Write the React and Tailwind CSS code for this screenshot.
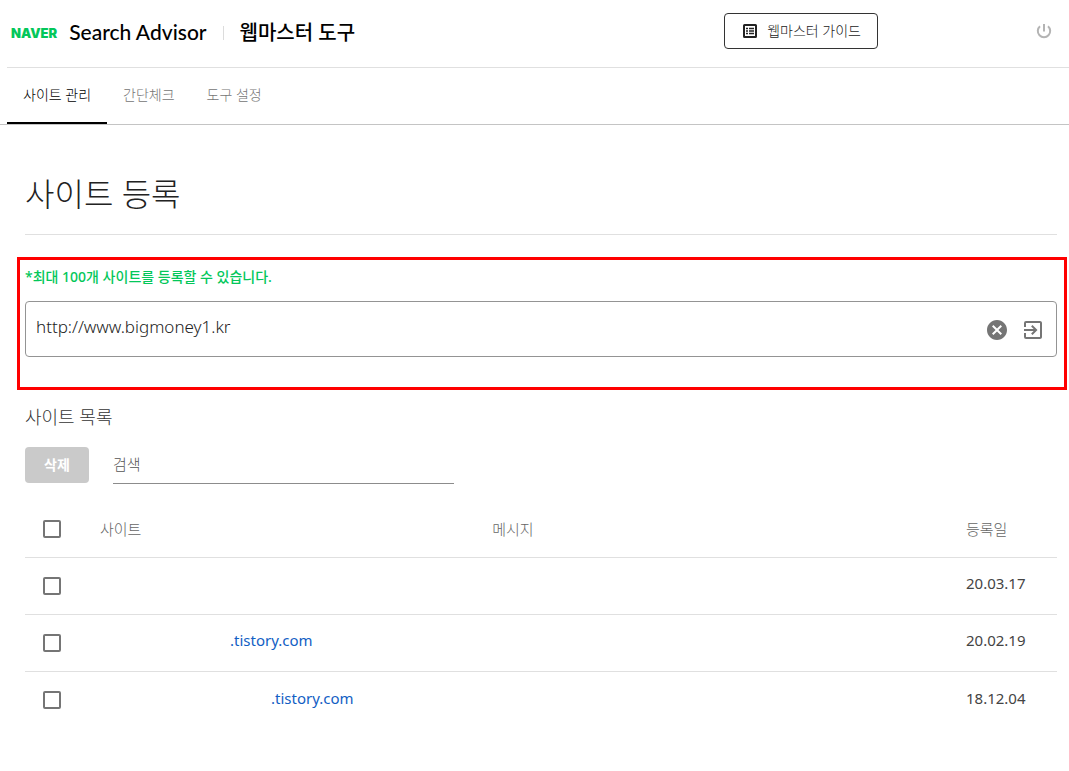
import { useState } from 'react'
import { MdCancel, MdExitToApp } from 'react-icons/md'

const tabs = ['사이트 관리', '간단체크', '도구 설정']

const sites = [
  { id: 1, name: '', date: '20.03.17', indent: '' },
  { id: 2, name: '.tistory.com', date: '20.02.19', indent: 'pl-[130px]' },
  { id: 3, name: '.tistory.com', date: '18.12.04', indent: 'pl-[171px]' },
]

function GuideIcon() {
  return (
    <svg viewBox="0 0 18 18" className="size-[18px]" fill="none" stroke="currentColor">
      <rect x="3" y="3" width="12" height="12" rx="0.5" strokeWidth="2" />
      <path d="M5 6.5h2M8 6.5h5M5 9h2M8 9h5M5 11.5h2M8 11.5h5" strokeWidth="1.4" />
    </svg>
  )
}

function PowerIcon() {
  return (
    <svg viewBox="0 0 18 18" className="size-[18px]" fill="none" stroke="currentColor" strokeWidth="2">
      <path d="M9 2v7.5M5 4.2a6.2 6.2 0 1 0 8 0" />
    </svg>
  )
}

function Header() {
  return (
    <header className="ml-[7px] flex h-[68px] items-center border-b border-[#e0e0e0] pb-[5px] pl-1 pr-4">
      <a href="#" className="mr-3 pt-1 font-['Inter'] text-[13px] leading-4 font-black text-[#03c75a]">
        NAVER
      </a>
      <a href="#" className="pt-[2px] font-['Lato',sans-serif] text-[21px] leading-7 font-medium text-black">
        Search Advisor
      </a>
      <span className="mx-4 mt-1 h-[14px] w-px bg-[#dcdcdc]" />
      <a href="#" className="pt-1 text-xl font-medium text-black">웹마스터 도구</a>
      <button className="mr-[157px] ml-auto flex h-9 items-center gap-2 rounded border border-[#333] px-4 text-sm text-[#222]">
        <GuideIcon />
        웹마스터 가이드
      </button>
      <button aria-label="로그아웃" className="text-[#b4b4b4]">
        <PowerIcon />
      </button>
    </header>
  )
}

function Tabs({ active, onChange }) {
  return (
    <nav className="flex h-[57px] border-b border-[#c4c4c4] pl-[7px]">
      {tabs.map((tab, index) => (
        <button
          key={tab}
          onClick={() => onChange(index)}
          className={`border-b-2 px-4 text-sm ${
            index === active ? 'border-black text-black' : 'border-transparent text-[#757575]'
          }`}
        >
          {tab}
        </button>
      ))}
    </nav>
  )
}

function Checkbox({ label, checked, onChange }) {
  return (
    <input
      type="checkbox"
      aria-label={label}
      checked={checked}
      onChange={onChange}
      className="block size-[18px] appearance-none rounded-xs border-2 border-[#757575] checked:bg-[#757575]"
    />
  )
}

function SiteTable({ selected, setSelected }) {
  const toggle = (id) => {
    setSelected(selected.includes(id) ? selected.filter((s) => s !== id) : [...selected, id])
  }

  const allSelected = selected.length === sites.length

  return (
    <table className="mt-[18px] w-full table-fixed text-left text-[15px] text-[#444]">
      <thead>
        <tr className="h-[55px] border-b border-[#e0e0e0] text-[#666]">
          <th className="w-[59px] pl-[18px]">
            <Checkbox
              label="전체 선택"
              checked={allSelected}
              onChange={() => setSelected(allSelected ? [] : sites.map((s) => s.id))}
            />
          </th>
          <th className="w-[38%] px-4 font-light">사이트</th>
          <th className="px-4 font-light">메시지</th>
          <th className="w-[107px] px-4 font-light">등록일</th>
        </tr>
      </thead>
      <tbody>
        {sites.map((site) => (
          <tr key={site.id} className="h-[57px] border-b border-[#e0e0e0] last:border-b-0">
            <td className="pl-[18px]">
              <Checkbox label="선택" checked={selected.includes(site.id)} onChange={() => toggle(site.id)} />
            </td>
            <td className="px-4 pb-1 font-normal">
              <div className={site.indent}>
                {site.name && <a href="#" className="text-[#1260c4]">{site.name}</a>}
              </div>
            </td>
            <td />
            <td className="px-4 pb-1 font-normal">{site.date}</td>
          </tr>
        ))}
      </tbody>
    </table>
  )
}

export default function App() {
  const [activeTab, setActiveTab] = useState(0)
  const [url, setUrl] = useState('http://www.bigmoney1.kr')
  const [selected, setSelected] = useState([])

  return (
    <div className="min-h-screen bg-white font-['Noto_Sans','Noto_Sans_CJK_KR',sans-serif] font-light">
      <Header />
      <Tabs active={activeTab} onChange={setActiveTab} />

      <main className="pr-3 pl-[25px]">
        <h1 className="border-b border-[#e0e0e0] pt-11 pb-4 text-[32px] leading-[49px] text-[#222]">
          사이트 등록
        </h1>

        {/* Register form */}
        <form
          onSubmit={(e) => e.preventDefault()}
          className="mt-[22px] -mr-[10px] -ml-2 border-[3px] border-[#ff0000] pt-[7px] pr-[7px] pb-[30px] pl-[5px]"
        >
          <label htmlFor="site-url" className="block text-sm leading-5 font-medium text-[#03c75a]">
            *최대 100개 사이트를 등록할 수 있습니다.
          </label>
          <div className="mt-[14px] flex h-14 items-center rounded border border-[#949494] pt-[2px] pr-[11px] pl-[10px] text-[#757575]">
            <input
              id="site-url"
              value={url}
              onChange={(e) => setUrl(e.target.value)}
              className="min-w-0 flex-1 pb-[6px] text-[17px] text-[#222] outline-none"
            />
            <button type="button" aria-label="지우기" onClick={() => setUrl('')}>
              <MdCancel className="size-6" />
            </button>
            <button type="submit" aria-label="등록" className="ml-3">
              <MdExitToApp className="size-6" />
            </button>
          </div>
        </form>

        {/* Site list */}
        <h2 className="mt-[15px] text-lg leading-6 text-[#333]">사이트 목록</h2>
        <div className="mt-[18px] flex items-start gap-6">
          <button disabled={selected.length === 0} className="h-9 w-16 rounded bg-[#cacaca] text-sm font-bold text-white">
            삭제
          </button>
          <input
            aria-label="검색"
            placeholder="검색"
            className="h-[37px] w-[33%] border-b border-[#8c8c8c] pb-[2px] text-[15px] outline-none placeholder:text-[#555]"
          />
        </div>
        <SiteTable selected={selected} setSelected={setSelected} />
      </main>
    </div>
  )
}
